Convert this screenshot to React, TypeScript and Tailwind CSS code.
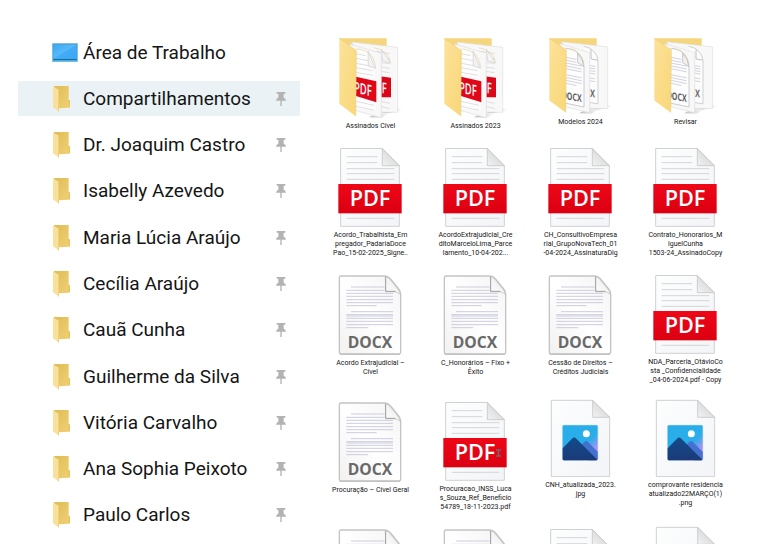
type Kind = 'pdf' | 'docx' | 'image' | 'pdf-folder' | 'docx-folder'

type Entry = {
  kind: Kind
  label: string
  cursor?: boolean
}

const PLACES = [
  'Compartilhamentos',
  'Dr. Joaquim Castro',
  'Isabelly Azevedo',
  'Maria Lúcia Araújo',
  'Cecília Araújo',
  'Cauã Cunha',
  'Guilherme da Silva',
  'Vitória Carvalho',
  'Ana Sophia Peixoto',
  'Paulo Carlos',
]

const ENTRIES: Entry[] = [
  { kind: 'pdf-folder', label: 'Assinados Cível' },
  { kind: 'pdf-folder', label: 'Assinados 2023' },
  { kind: 'docx-folder', label: 'Modelos 2024' },
  { kind: 'docx-folder', label: 'Revisar' },
  { kind: 'pdf', label: 'Acordo_Trabalhista_Em\npregador_PadariaDoce\nPao_15-02-2025_Signe..' },
  { kind: 'pdf', label: 'AcordoExtrajudicial_Cre\nditoMarceloLima_Parce\nlamento_10-04-202...' },
  { kind: 'pdf', label: 'CH_ConsultivoEmpresa\nrial_GrupoNovaTech_01\n-04-2024_AssinaturaDig' },
  { kind: 'pdf', label: 'Contrato_Honorarios_M\niguelCunha\n1503-24_AssinadoCopy' },
  { kind: 'docx', label: 'Acordo Extrajudicial –\nCível' },
  { kind: 'docx', label: 'C_Honorários – Fixo +\nÊxito' },
  { kind: 'docx', label: 'Cessão de Direitos –\nCréditos Judiciais' },
  { kind: 'pdf', label: 'NDA_Parceria_OtávioCo\nsta _Confidencialidade\n_04-06-2024.pdf - Copy' },
  { kind: 'docx', label: 'Procuração – Cível Geral' },
  { kind: 'pdf', label: 'Procuracao_INSS_Luca\ns_Souza_Ref_Beneficio\n54789_18-11-2023.pdf', cursor: true },
  { kind: 'image', label: 'CNH_atualizada_2023.\njpg' },
  { kind: 'image', label: 'comprovante residencia\natualizado22MARÇO(1)\n.png' },
  { kind: 'docx', label: '' },
  { kind: 'docx', label: '' },
  { kind: 'pdf', label: '' },
  { kind: 'image', label: '' },
]

// Gradients shared by every icon on the page
function IconDefs() {
  return (
    <svg className="absolute h-0 w-0" aria-hidden="true">
      <defs>
        <linearGradient id="sheet" x1="0" y1="0" x2="1" y2="1">
          <stop offset="0" stopColor="#fdfefe" />
          <stop offset="1" stopColor="#f2f4f7" />
        </linearGradient>
        <linearGradient id="fold" x1="0" y1="1" x2="0.8" y2="0.2">
          <stop offset="0" stopColor="#f3f3f3" />
          <stop offset="1" stopColor="#d3d3d3" />
        </linearGradient>
        <linearGradient id="band" x1="0" y1="0" x2="0" y2="1">
          <stop offset="0" stopColor="#ee0716" />
          <stop offset="1" stopColor="#db0012" />
        </linearGradient>
        <linearGradient id="curl" x1="0" y1="1" x2="1" y2="0">
          <stop offset="0" stopColor="#ffffff" />
          <stop offset="0.5" stopColor="#f4f4f4" />
          <stop offset="1" stopColor="#b4b4b4" />
        </linearGradient>
        <linearGradient id="doc" x1="0" y1="1" x2="1" y2="0">
          <stop offset="0" stopColor="#f1f1f1" />
          <stop offset="0.5" stopColor="#ffffff" />
          <stop offset="1" stopColor="#f3f3f3" />
        </linearGradient>
        <linearGradient id="flap" x1="0" y1="0" x2="1" y2="1">
          <stop offset="0" stopColor="#fce29a" />
          <stop offset="1" stopColor="#f9d777" />
        </linearGradient>
        <linearGradient id="shade" x1="0" y1="0" x2="1" y2="0">
          <stop offset="0" stopColor="#bdbdbd" />
          <stop offset="1" stopColor="#bdbdbd" stopOpacity="0" />
        </linearGradient>
        <linearGradient id="small-back" x1="0" y1="0" x2="1" y2="1">
          <stop offset="0" stopColor="#dfbd55" />
          <stop offset="1" stopColor="#f0d074" />
        </linearGradient>
        <linearGradient id="screen" x1="0" y1="0" x2="1" y2="1">
          <stop offset="0" stopColor="#3ba9f5" />
          <stop offset="0.48" stopColor="#58b9fb" />
          <stop offset="0.5" stopColor="#42acf8" />
          <stop offset="1" stopColor="#3ca6f5" />
        </linearGradient>
        <linearGradient id="sky" x1="0" y1="0" x2="1" y2="1">
          <stop offset="0.6" stopColor="#29aeea" />
          <stop offset="0.8" stopColor="#a394f0" />
        </linearGradient>
        <linearGradient id="hill" x1="0" y1="0" x2="0" y2="1">
          <stop offset="0" stopColor="#134b8a" />
          <stop offset="1" stopColor="#1b3a78" />
        </linearGradient>
      </defs>
    </svg>
  )
}

function DesktopIcon() {
  return (
    <svg className="h-[19px] w-[26px]" viewBox="0 0 78 57" aria-hidden="true">
      <rect x="1" y="1" width="76" height="55" fill="#4a9fd0" />
      <rect x="4" y="5" width="70" height="43" fill="url(#screen)" />
      <rect x="4" y="48" width="70" height="4" fill="#176b9e" />
      <rect x="1" y="52" width="76" height="4" fill="#65bdeb" />
    </svg>
  )
}

function SmallFolderIcon() {
  return (
    <svg className="h-[26px] w-[18px]" viewBox="0 0 54 78" aria-hidden="true">
      <path d="M6 0H50V41L54 44V63L50 65L21 67Z" fill="url(#small-back)" />
      <path d="M50 41L54 44V63L50 65Z" fill="#e8c35b" />
      <path d="M3 1L21 12V77L3 64Z" fill="#fae19b" />
      <path d="M18 10L21 12V77L18 75Z" fill="#eed184" />
    </svg>
  )
}

function PinIcon() {
  return (
    <svg className="h-[14px] w-[10px]" viewBox="0 0 30 42" fill="#b3b3b3" aria-hidden="true">
      <path d="M2 0H28V5H23V17Q29 19 30 26H17V42H13V26H0Q1 19 7 17V5H2Z" />
    </svg>
  )
}

function PdfIcon() {
  return (
    <svg className="h-[79px] w-[66px]" viewBox="0 0 198 237" aria-hidden="true">
      <path d="M8 1.500H133L184 53V235H8Z" fill="url(#sheet)" stroke="#cfd1d2" strokeWidth="3" />
      <path d="M133 1.500L184 53H133Z" fill="url(#fold)" stroke="#c6c8c9" strokeWidth="2.500" />
      <path d="M26 26H118M26 44H118M26 62H169M26 77H169M26 94H169M26 211H169" stroke="#d4d6d7" strokeWidth="3" />
      <rect x="1" y="108" width="190" height="88" fill="url(#band)" />
      <text x="96" y="175" textAnchor="middle" fill="#fff" fontFamily="'Open Sans', 'Noto Sans', sans-serif" fontSize="65" fontWeight="600">
        PDF
      </text>
    </svg>
  )
}

function DocxIcon() {
  return (
    <svg className="h-[80px] w-[66px]" viewBox="0 0 198 240" aria-hidden="true">
      <path d="M9 3H140Q150 3 157 11L182 42Q188 49 188 58V232Q188 237 183 237H9Q4 237 4 232V8Q4 3 9 3Z" fill="url(#doc)" stroke="#c4c4c4" strokeWidth="4" />
      <path d="M5 238H186" stroke="#b4b4b4" strokeWidth="2" />
      <path d="M142 4Q151 7 157 14L180 42Q186 50 187 58Q180 51 168 50H143Z" fill="url(#curl)" stroke="#b8b8b8" strokeWidth="2" />
      <path d="M143 5V49H172" fill="none" stroke="#a2a2a2" strokeWidth="3" />
      <path
        d="M39 36H140M25 46H140M25 55H165M25 64H165M25 74H165M25 83H165M25 92H116M39 110H165M25 119H165M25 123H165M25 130H165M25 139H165M25 149H165M25 158H91"
        stroke="#cdcddf"
        strokeWidth="3"
      />
      <text x="96" y="218" textAnchor="middle" fill="#696969" fontFamily="'Open Sans', 'Noto Sans', sans-serif" fontSize="47" fontWeight="700">
        DOCX
      </text>
    </svg>
  )
}

function ImageIcon() {
  return (
    <svg className="h-[78px] w-[66px]" viewBox="0 0 198 234" aria-hidden="true">
      <path d="M10 4H134L185 55V233H10Z" fill="url(#sheet)" stroke="#cfd1d2" strokeWidth="3" />
      <path d="M134 4L185 55H134Z" fill="url(#fold)" stroke="#c6c8c9" strokeWidth="2.500" />
      <rect x="42" y="77" width="109" height="109" rx="6" fill="#d7dfea" />
      <rect x="44" y="79" width="105" height="105" rx="4" fill="url(#sky)" />
      <path d="M100 137L110 128Q115 124 120 129L149 158V180L145 184H122Z" fill="#4470cf" />
      <path d="M44 148L72 119Q78 112 85 119L148 182L145 184H48Q44 184 44 180Z" fill="url(#hill)" />
      <circle cx="115" cy="104" r="10.500" fill="#fff" />
    </svg>
  )
}

function PdfSheets() {
  return (
    <>
      <g stroke="#d9d9d9" strokeWidth="2.500">
        <path d="M112 40L152 47M124 59L152 63M124 73L152 77M124 87L152 91M124 100L152 104M124 190L152 196M124 205L152 212" />
      </g>
      <path d="M104 29Q128 32 141 46Q151 56 154 72" fill="none" stroke="#e8d5a0" strokeWidth="2" />
      <path d="M127 35L155 75L131 68Z" fill="#f5f5f5" stroke="#cecece" strokeWidth="2" />
      <path d="M122 115L156 119V178H122Z" fill="#d90719" />
      <text transform="matrix(.62 .1 0 1 128 165)" fill="#fff" fontFamily="'Open Sans', 'Noto Sans', sans-serif" fontSize="45" fontWeight="600">
        F
      </text>
      <path d="M32 18L127 46V239L51 218Z" fill="#f8f8f8" stroke="#dedede" strokeWidth="2" />
      <path d="M51 32L87 39L107 87L109 220L51 211Z" fill="#fdfdfd" />
      <path d="M51 47L80 53M51 61L88 68M51 76L101 85M51 89L101 98M51 103L101 112M51 190L105 202M51 205L105 217" stroke="#d8d8d8" strokeWidth="2.500" />
      <path d="M50 33Q78 34 94 49Q107 63 110 89" fill="none" stroke="#e8d5a0" strokeWidth="2" />
      <path d="M87 39L109 91L88 84Z" fill="#f2f2f2" stroke="#cfcfcf" strokeWidth="2" />
      <path d="M51 116L112 130V193L51 174Z" fill="#e00719" />
      <text transform="matrix(.62 .12 0 1 45 164)" fill="#fff" fontFamily="'Open Sans', 'Noto Sans', sans-serif" fontSize="46" fontWeight="600">
        PDF
      </text>
    </>
  )
}

function DocxSheets() {
  return (
    <>
      <path d="M104 26Q126 30 136 44Q146 56 147 72V208L122 204" fill="#fcfcfc" stroke="#c6c6c6" strokeWidth="2.500" />
      <path d="M126 36V66L145 70" fill="none" stroke="#b4b4b4" strokeWidth="2.500" />
      <path d="M122 87L139 90M122 95L139 98M122 103L139 106M122 111L139 114M122 126L139 129M122 135L139 138" stroke="#c9c9d9" strokeWidth="2.500" />
      <text transform="matrix(.66 .06 0 1 123 186)" fill="#666" fontFamily="'Open Sans', 'Noto Sans', sans-serif" fontSize="34" fontWeight="700">
        X
      </text>
      <path d="M32 18L122 46V236L51 218Z" fill="#f8f8f8" stroke="#dedede" strokeWidth="2" />
      <path d="M50 33Q78 34 90 50Q104 66 105 90V218L51 206" fill="#fdfdfd" stroke="#c0c0c0" strokeWidth="2.500" />
      <path d="M60 34Q79 38 90 51Q100 62 103 78" fill="none" stroke="#ead7a6" strokeWidth="2.500" />
      <path d="M86 48V78L104 90Q103 66 86 48Z" fill="#f1f1f1" stroke="#b0b0b0" strokeWidth="2" />
      <path
        d="M51 61L82 68M51 70L82 77M51 79L98 89M51 88L98 98M51 97L98 107M51 116L98 126M51 125L98 135M51 134L98 144M51 143L82 150"
        stroke="#c9c9da"
        strokeWidth="2.500"
      />
      <text transform="matrix(.64 .12 0 1 38 191)" fill="#5c5c5c" fontFamily="'Open Sans', 'Noto Sans', sans-serif" fontSize="33" fontWeight="700">
        DOCX
      </text>
    </>
  )
}

function FolderIcon({ docx }: { docx?: boolean }) {
  return (
    <svg className={docx ? 'h-[76px] w-[66px]' : 'h-[80px] w-[66px]'} viewBox="-3 0 198 240" preserveAspectRatio="none" aria-hidden="true">
      <path d="M130 224L172 210L192 216L150 226Z" fill="url(#shade)" />
      <path d="M90 238L126 218L152 226L128 239Z" fill="url(#shade)" />
      <path d="M1 1H143V200L52 210Z" fill="#f5d67c" />
      <path d="M38 12L176 28V223L120 222Z" fill="#f8f8f8" stroke="#dedede" strokeWidth="2" />
      {docx ? <DocxSheets /> : <PdfSheets />}
      <path d="M1 1L52 38L50 235L1 197Z" fill="url(#flap)" />
      <path d="M1 1L52 38L50 235" fill="none" stroke="#efcf7b" strokeWidth="2" />
    </svg>
  )
}

function TextCursor() {
  return (
    <svg className="absolute top-[50px] left-[73px] h-[8px] w-[5px]" viewBox="0 0 10 16" fill="none" stroke="#6b6b6b" strokeWidth="3" aria-hidden="true">
      <path d="M0 2H10M5 2V14M0 14H10" />
    </svg>
  )
}

function EntryIcon({ kind }: { kind: Kind }) {
  if (kind === 'pdf') return <PdfIcon />
  if (kind === 'docx') return <DocxIcon />
  if (kind === 'image') return <ImageIcon />
  return <FolderIcon docx={kind === 'docx-folder'} />
}

export default function App() {
  return (
    <div className="flex h-screen overflow-hidden bg-white font-['Roboto',sans-serif] text-[#151515]">
      <IconDefs />
      <nav className="flex w-[300px] shrink-0 flex-col justify-between pt-[35px] pb-[11px] pl-[18px]">
        <a href="#desktop" className="flex h-[35px] items-center gap-[5px] pl-[34px] text-[19px] leading-[24px]">
          <DesktopIcon />
          Área de Trabalho
        </a>
        {PLACES.map((name, i) => (
          <div key={name} className={`flex h-[35px] items-center pr-[14px] pl-[34px] ${i === 0 ? 'bg-[#eaf2f5]' : ''}`}>
            <a href="#folder" className="flex flex-1 items-center gap-[13px] text-[19px] leading-[24px] whitespace-nowrap">
              <SmallFolderIcon />
              {name}
            </a>
            <button type="button" aria-label={`Desafixar ${name}`}>
              <PinIcon />
            </button>
          </div>
        ))}
      </nav>

      <main className="min-w-0 flex-1 overflow-y-auto pt-[38px] pl-[18px] [scrollbar-width:none]">
        <div className="grid grid-cols-[repeat(auto-fill,105px)] gap-y-[14px]">
          {ENTRIES.map((entry, i) => (
            <button
              key={i}
              type="button"
              className={`relative flex flex-col items-center gap-[4px] ${entry.kind === 'pdf' || entry.kind === 'docx' ? 'pt-[3px]' : ''}`}
            >
              <EntryIcon kind={entry.kind} />
              {entry.cursor && <TextCursor />}
              <span className="text-center text-[7px] leading-[9px] whitespace-pre">{entry.label}</span>
            </button>
          ))}
        </div>
      </main>
    </div>
  )
}
